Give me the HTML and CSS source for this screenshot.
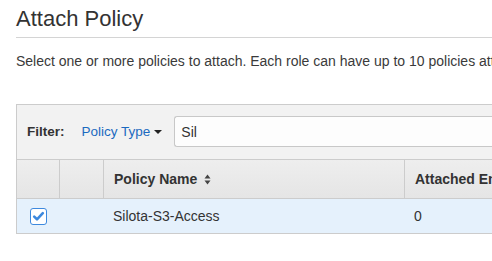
FILE: index.html
```html
<!DOCTYPE html>
<html lang="en">
<head>
    <meta charset="UTF-8">
    <meta name="viewport" content="width=device-width, initial-scale=1.0">
    <title>Attach Policy</title>
    <link rel="stylesheet" href="styles.css">
</head>
<body>

    <main class="page">
        <h1 class="page-title">Attach Policy</h1>
        <p class="intro">Select one or more policies to attach. Each role can have up to 10 policies attached.</p>

        <section class="policy-panel">
            <div class="filter-bar">
                <span class="filter-label">Filter:</span>
                <button class="filter-type" type="button">Policy Type <span class="caret"></span></button>
                <input class="filter-input" type="text" value="Sil" autocomplete="off">
            </div>

            <table class="policy-table">
                <colgroup>
                    <col class="col-check">
                    <col class="col-icon">
                    <col class="col-name">
                    <col>
                </colgroup>
                <thead>
                    <tr>
                        <th></th>
                        <th></th>
                        <th>
                            Policy Name
                            <svg class="sort-icon" width="7" height="11" viewBox="0 0 7 11">
                                <path d="M0.5 4.5 L3.5 0.5 L6.5 4.5 Z"/>
                                <path d="M0.5 6.5 L3.5 10.5 L6.5 6.5 Z"/>
                            </svg>
                        </th>
                        <th>Attached Entities</th>
                    </tr>
                </thead>
                <tbody>
                    <tr class="selected">
                        <td class="check-cell">
                            <span class="checkbox">
                                <svg width="13" height="13" viewBox="0 0 13 13">
                                    <path d="M2.2 6.6 L5 9.3 L10.8 3.2" fill="none" stroke="currentColor" stroke-width="2.6" stroke-linecap="round" stroke-linejoin="round"/>
                                </svg>
                            </span>
                        </td>
                        <td></td>
                        <td>Silota-S3-Access</td>
                        <td>0</td>
                    </tr>
                </tbody>
            </table>
        </section>
    </main>

</body>
</html>
```

FILE: styles.css
```css
:root {
    --text-color: #3a3a3a;
    --title-color: #333;
    --border-color: #cccccc;
    --panel-background: #f2f2f2;
    --link-color: #1b6ac0;
    --selected-background: #e5f1fc;
    --check-color: #3d89de;
}

* {
    box-sizing: border-box;
    margin: 0;
    padding: 0;
}

html,
body {
    overflow: hidden;
}

body {
    font-family: "Liberation Sans", Arial, sans-serif;
    color: var(--text-color);
    background-color: #fff;
}

.page {
    width: 640px;
    padding-left: 16px;
}

.page-title {
    margin-top: 6px;
    padding-bottom: 5px;
    font-size: 22px;
    line-height: 26px;
    font-weight: 400;
    color: var(--title-color);
    border-bottom: 1px solid #d4d4d4;
}

.intro {
    margin-top: 13px;
    font-size: 14px;
    line-height: 20px;
    white-space: nowrap;
}

.policy-panel {
    margin-top: 33px;
    border: 1px solid var(--border-color);
    border-bottom: none;
    background-color: var(--panel-background);
}

.filter-bar {
    display: flex;
    align-items: center;
    padding: 11px 0 12px 10px;
}

.filter-label {
    font-size: 13.5px;
    font-weight: 700;
    color: var(--title-color);
}

.filter-type {
    display: flex;
    align-items: center;
    margin-left: 17px;
    background: none;
    border: none;
    font-family: inherit;
    font-size: 13.5px;
    color: var(--link-color);
    cursor: pointer;
}

.caret {
    margin-left: 4px;
    border-top: 4px solid #222;
    border-left: 4px solid transparent;
    border-right: 4px solid transparent;
}

.filter-input {
    flex: 1;
    height: 31px;
    margin-left: 12px;
    padding: 0 6px;
    border: 1px solid #c8c8c8;
    border-right: none;
    border-radius: 3px 0 0 3px;
    background-color: #fdfdfd;
    font-family: inherit;
    font-size: 14px;
    color: var(--title-color);
}

.filter-input:focus {
    outline: none;
}

.policy-table {
    width: 100%;
    table-layout: fixed;
    border-collapse: separate;
    border-spacing: 0;
    font-size: 14px;
    line-height: 16px;
    background-color: #fff;
}

.col-check {
    width: 42px;
}

.col-icon {
    width: 44px;
}

.col-name {
    width: 301px;
}

.policy-table th {
    padding: 11px 10px;
    text-align: left;
    font-weight: 700;
    color: var(--title-color);
    white-space: nowrap;
    background: linear-gradient(#eeeeee, #e5e5e5);
    border-top: 1px solid var(--border-color);
    border-bottom: 1px solid var(--border-color);
}

.policy-table th + th {
    border-left: 1px solid var(--border-color);
}

.sort-icon {
    margin-left: 3px;
    vertical-align: -1px;
    fill: #444;
}

.policy-table td {
    padding: 9px 10px;
    color: var(--title-color);
    border-bottom: 1px solid var(--border-color);
}

.policy-table tr.selected td {
    background-color: var(--selected-background);
}

.policy-table td.check-cell {
    padding: 0;
    vertical-align: middle;
    text-align: center;
}

.checkbox {
    display: inline-flex;
    align-items: center;
    justify-content: center;
    width: 17px;
    height: 17px;
    margin-top: 2px;
    border: 1.5px solid var(--check-color);
    border-radius: 3px;
    background-color: #fff;
    color: var(--check-color);
}
```
